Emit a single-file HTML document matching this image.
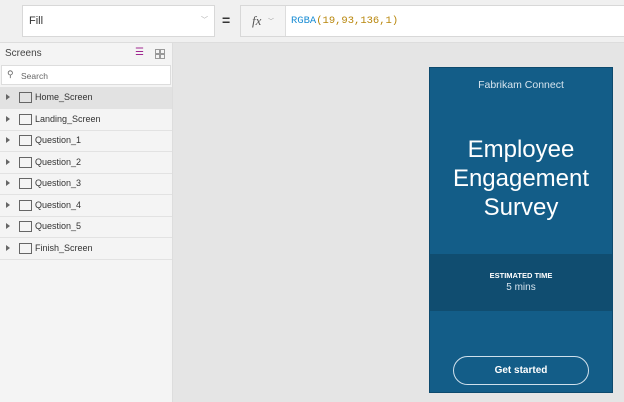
<html><head><style>
body{margin:0;width:624px;height:402px;background:#e5e5e5;font-family:"Liberation Sans",sans-serif;position:relative;overflow:hidden}
.top{position:absolute;left:0;top:0;width:624px;height:42px;background:#f0f0f0;border-bottom:1px solid #ddd}
.box{position:absolute;background:#fff;border:1px solid #d8d8d8}
.side{position:absolute;left:0;top:43px;width:172px;height:359px;background:#f4f4f4;border-right:1px solid #ddd}
.row{position:absolute;left:0;width:172px;height:21px;border-bottom:1px solid #e2e2e2;font-size:9px;color:#333}
.row .tri{position:absolute;left:6px;top:7px;width:0;height:0;border-left:4px solid #666;border-top:3px solid transparent;border-bottom:3px solid transparent}
.row .ic{position:absolute;left:19px;top:5px;width:11px;height:9px;border:1px solid #666}
.row span{position:absolute;left:35px;top:5px}
.card{position:absolute;left:429px;top:67px;width:184px;height:326px;background:#135d88;color:#fff;text-align:center;border:1px solid #0d4a6e;box-sizing:border-box}
.g{position:absolute;width:3px;height:3px;border:1px solid #999}
</style></head><body>
<div class="top"></div>
<div class="box" style="left:22px;top:5px;width:191px;height:30px"><span style="position:absolute;left:6px;top:9px;font-size:11px;color:#333">Fill</span><span style="position:absolute;right:6px;top:9px;font-size:7px;color:#aaa">﹀</span></div>
<div style="position:absolute;left:222px;top:12px;font-size:14px;color:#333;font-weight:bold">=</div>
<div class="box" style="left:240px;top:5px;width:384px;height:30px;border-right:none"><div style="position:absolute;left:0;top:0;width:44px;height:30px;background:#f4f4f4;border-right:1px solid #ddd"><i style="position:absolute;left:11px;top:7px;font-family:'Liberation Serif',serif;font-size:13px;color:#555">fx</i><span style="position:absolute;left:27px;top:10px;font-size:6px;color:#999">﹀</span></div><span style="position:absolute;left:50px;top:9px;font-family:'Liberation Mono',monospace;font-size:10.5px;color:#b8860b"><span style="color:#1c8ed4">RGBA</span>(19,93,136,1)</span></div>
<div class="side">
<div style="position:absolute;left:5px;top:5px;font-size:10px;color:#444">Screens</div>
<div style="position:absolute;left:135px;top:4px;font-size:10px;color:#a02890">☰</div>
<i class="g" style="left:155px;top:6px"></i><i class="g" style="left:160px;top:6px"></i><i class="g" style="left:155px;top:11px"></i><i class="g" style="left:160px;top:11px"></i>
<div style="position:absolute;left:1px;top:22px;width:170px;height:20px;background:#fff;border:1px solid #ddd;box-sizing:border-box"><span style="position:absolute;left:5px;top:3px;font-size:9px;color:#666">⚲</span><span style="position:absolute;left:19px;top:5px;font-size:8.5px;color:#666">Search</span></div>
</div>
<div class="row" style="top:87px;background:#e2e2e2"><i class="tri"></i><i class="ic"></i><span>Home_Screen</span></div>
<div class="row" style="top:109px"><i class="tri"></i><i class="ic"></i><span>Landing_Screen</span></div>
<div class="row" style="top:130px"><i class="tri"></i><i class="ic"></i><span>Question_1</span></div>
<div class="row" style="top:152px"><i class="tri"></i><i class="ic"></i><span>Question_2</span></div>
<div class="row" style="top:173px"><i class="tri"></i><i class="ic"></i><span>Question_3</span></div>
<div class="row" style="top:195px"><i class="tri"></i><i class="ic"></i><span>Question_4</span></div>
<div class="row" style="top:216px"><i class="tri"></i><i class="ic"></i><span>Question_5</span></div>
<div class="row" style="top:238px"><i class="tri"></i><i class="ic"></i><span>Finish_Screen</span></div>
<div class="card">
<div style="position:absolute;top:11px;width:100%;font-size:10.5px;color:#d6e4ee">Fabrikam Connect</div>
<div style="position:absolute;top:67px;width:100%;font-size:24px;line-height:29px">Employee<br>Engagement<br>Survey</div>
<div style="position:absolute;top:186px;left:0;width:100%;height:57px;background:#104d70">
<div style="position:absolute;top:17px;width:100%;font-size:7.5px;font-weight:bold">ESTIMATED TIME</div>
<div style="position:absolute;top:28px;width:100%;font-size:10px;color:#d6e4ee">5 mins</div></div>
<div style="position:absolute;left:23px;top:288px;width:136px;height:29px;border:1px solid #cfe0ec;border-radius:15px;box-sizing:border-box;font-size:10px;font-weight:bold;line-height:27px">Get started</div>
</div>
</body></html>
